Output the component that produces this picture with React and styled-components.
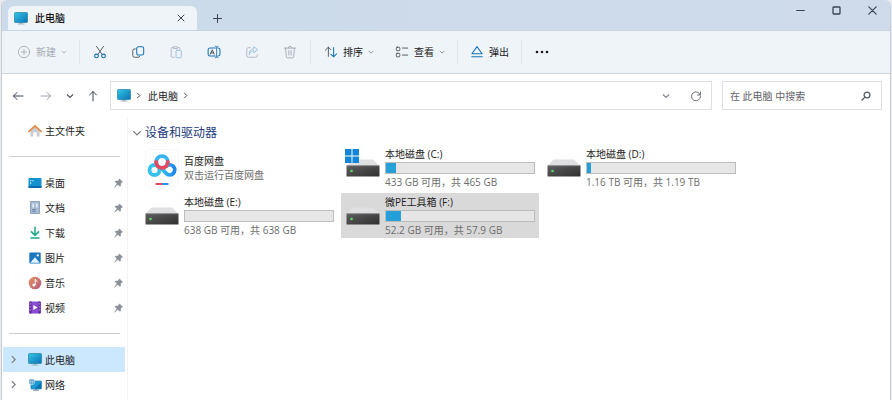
import React, { useState } from 'react';
import styled, { createGlobalStyle } from 'styled-components';

const GlobalStyle = createGlobalStyle`
  * { box-sizing: border-box; }
  html, body, #root { height: 100%; }
  body {
    margin: 0;
    background: #e9ebee;
    font-family: 'Open Sans', 'Noto Sans CJK SC', sans-serif;
    font-size: 10px;
    line-height: 14px;
    color: #1b1b1b;
  }
  button, input {
    font: inherit;
    color: inherit;
    border: none;
    background: none;
    padding: 0;
    margin: 0;
  }
  svg { display: block; flex-shrink: 0; }
`;

const Window = styled.div`
  height: 100%;
  margin: 0 1px;
  display: flex;
  flex-direction: column;
  background: #fff;
  border: 1px solid #c5ccd6;
  border-width: 0 1px;
  border-radius: 6px 6px 0 0;
  overflow: hidden;
`;

const TitleBar = styled.header`
  height: 30px;
  flex-shrink: 0;
  display: flex;
  align-items: flex-end;
  padding-left: 6px;
  background: linear-gradient(90deg, #cbdbea, #cfdbeb);
`;

const Tab = styled.div`
  width: 189px;
  height: 24px;
  display: flex;
  align-items: center;
  gap: 7px;
  padding: 0 8px 0 6px;
  background: #eff4f9;
  border-radius: 6px 6px 0 0;
`;

const TabTitle = styled.span`
  flex: 1;
  font-weight: 500;
  color: #111;
`;

const IconBtn = styled.button`
  width: ${p => p.$w || 20}px;
  height: ${p => p.$h || 20}px;
  display: flex;
  align-items: center;
  justify-content: center;
  flex-shrink: 0;
  color: ${p => p.$color || '#3b4350'};
  border-radius: 3px;
  &:hover:not(:disabled) { background: rgba(0, 0, 0, 0.06); }
`;

const NewTab = styled.div`
  margin-left: 10px;
  padding-bottom: 2px;
`;

const WindowControls = styled.div`
  margin-left: auto;
  align-self: flex-start;
  display: flex;
`;

const Toolbar = styled.div`
  height: 44px;
  flex-shrink: 0;
  display: flex;
  align-items: center;
  padding: 0 15px;
  background: #eff4f9;
  border-top: 1px solid #c9d4e1;
  border-bottom: 1px solid #cfd5df;
`;

const ToolGroup = styled.div`
  display: flex;
  gap: 21px;
  padding-left: 1px;
`;

const IconGroup = styled.div`
  display: flex;
  gap: 18px;
  margin: 0 -2px;
`;

const ToolBtn = styled.button`
  height: 28px;
  display: flex;
  align-items: center;
  gap: 5px;
  color: ${p => (p.disabled ? '#a5abb3' : '#1b1b1b')};
  border-radius: 3px;
  &:hover:not(:disabled) { background: rgba(0, 0, 0, 0.05); }
`;

const Separator = styled.span`
  width: 1px;
  height: 24px;
  margin: 0 12px;
  background: #dfe4eb;
`;

const AddressRow = styled.div`
  display: flex;
  align-items: center;
  flex-shrink: 0;
  padding: 7px 8px 8px 6px;
`;

const NavButtons = styled.div`
  display: flex;
  gap: 4px;
  width: 102px;
`;

const AddressBox = styled.div`
  flex: 1;
  height: 29px;
  display: flex;
  align-items: center;
  gap: 4px;
  padding: 0 5px 0 6px;
  border: 1px solid #dcdfe3;
`;

const Crumb = styled.a`
  color: #1b1b1b;
  text-decoration: none;
  margin-left: 2px;
`;

const BoxTools = styled.div`
  margin-left: auto;
  display: flex;
  gap: 10px;
`;

const SearchBox = styled.form`
  width: 160px;
  height: 29px;
  margin-left: 10px;
  display: flex;
  align-items: center;
  padding: 0 5px 0 7px;
  border: 1px solid #dcdfe3;
`;

const SearchInput = styled.input`
  flex: 1;
  min-width: 0;
  outline: none;
  &::placeholder { color: #5f6368; opacity: 1; }
`;

const Body = styled.div`
  flex: 1;
  min-height: 0;
  display: flex;
`;

const Sidebar = styled.nav`
  width: 126px;
  flex-shrink: 0;
  border-right: 1px solid #f3f3f3;
  overflow: hidden;
`;

const SideLink = styled.a`
  height: 25px;
  margin: 0 2px 0 1px;
  display: flex;
  align-items: center;
  gap: 3px;
  padding: 0 2px 0 6px;
  color: #1b1b1b;
  text-decoration: none;
  background: ${p => (p.$active ? '#cce8ff' : 'transparent')};
`;

const Expander = styled.span`
  width: 16px;
`;

const SideLabel = styled.span`
  flex: 1;
`;

const Rule = styled.hr`
  margin: 13px 7px;
  border: none;
  height: 1px;
  background: #cfcfcf;
`;

const Main = styled.main`
  flex: 1;
  min-width: 0;
  padding: 5px 8px 0 4px;
`;

const GroupHeader = styled.h2`
  display: flex;
  align-items: center;
  gap: 3px;
  margin: 0;
  height: 20px;
  font-size: 12px;
  font-weight: 400;
  color: #22397c;
`;

const Grid = styled.div`
  display: grid;
  grid-template-columns: repeat(auto-fill, 198px);
  gap: 3px;
  padding: 2px 0 0 8px;
`;

const Tile = styled.button`
  height: 45px;
  display: flex;
  align-items: center;
  gap: 5px;
  padding: 0 4px 0 5px;
  text-align: left;
  border-radius: 1px;
  background: ${p => (p.$selected ? '#d9d9d9' : 'transparent')};
`;

const TileIcon = styled.span`
  position: relative;
  width: 34px;
  display: flex;
  justify-content: center;
`;

const Badge = styled.span`
  position: absolute;
  top: -10px;
  left: -1px;
`;

const TileText = styled.span`
  flex: 1;
  min-width: 0;
  display: flex;
  flex-direction: column;
`;

const Name = styled.span`
  color: #1b1b1b;
`;

const Sub = styled.span`
  color: #6d6d6d;
`;

const Usage = styled.span`
  height: 12px;
  margin: 1px 0;
  border: 1px solid #bcbcbc;
  background: #e6e6e6;
`;

const UsageFill = styled.span`
  display: block;
  height: 100%;
  background: #26a0da;
`;

const Svg = ({ w = 14, box = 16, sw = 1, children }) => (
  <svg width={w} height={w} viewBox={`0 0 ${box} ${box}`} fill="none" stroke="currentColor"
    strokeWidth={sw} strokeLinecap="round" strokeLinejoin="round" aria-hidden="true">
    {children}
  </svg>
);

const Chevron = ({ dir = 'down', size = 8, color = '#7b8189' }) => (
  <svg width={size} height={size} viewBox="0 0 8 8" fill="none" stroke={color} strokeWidth="1.1" aria-hidden="true">
    <path d={dir === 'down' ? 'M1 2.5 4 5.5 7 2.5' : 'M2.5 1 5.5 4 2.5 7'} />
  </svg>
);

const MonitorIcon = () => (
  <svg width="14" height="13" viewBox="0 0 14 13" aria-hidden="true">
    <defs>
      <linearGradient id="screen" x1="0" y1="0" x2="1" y2="1">
        <stop offset="0" stopColor="#35c6e2" />
        <stop offset="1" stopColor="#0a72b8" />
      </linearGradient>
    </defs>
    <path d="M5.5 10h3v1.7h-3z" fill="#8ea6b5" />
    <path d="M3.5 11.6h7v1h-7z" fill="#9fb4c2" />
    <rect x="0.5" y="0.5" width="13" height="10" rx="0.8" fill="url(#screen)" stroke="#2384a8" strokeWidth="0.7" />
  </svg>
);

const HomeIcon = () => (
  <svg width="14" height="14" viewBox="0 0 14 14" aria-hidden="true">
    <path d="M2.4 6.4 7 2.4l4.6 4v6.1H8.6V8.4H5.4v4.1h-3z" fill="#c9ccd1" />
    <path d="M5.4 8.4h3.2v4.1H5.4z" fill="#fff" />
    <path d="M1 7.4 7 1.9l6 5.5" fill="none" stroke="#e0904c" strokeWidth="1.9" strokeLinecap="round" strokeLinejoin="round" />
  </svg>
);

const DesktopIcon = () => (
  <svg width="14" height="12" viewBox="0 0 14 12" aria-hidden="true">
    <rect x="0.5" y="1" width="13" height="10" rx="1" fill="#1492cf" />
    <path d="M1 11h12a.5.5 0 0 0 .5-.5V9H.5v1.5a.5.5 0 0 0 .5.5z" fill="#0c6cab" />
    <path d="M2 3h1.3v1.2H2zM2 5.5h1.3v1.2H2zM4.4 3h1v1.2h-1z" fill="#d5f3ff" />
  </svg>
);

const DocumentIcon = () => (
  <svg width="14" height="13" viewBox="0 0 14 13" aria-hidden="true">
    <path d="M2.5.5h9v12h-9z" fill="#a7bbd3" stroke="#7b94b3" strokeWidth="0.8" />
    <path d="M4.3 2.6h5.4v4H4.3z" fill="#dfe9f4" />
    <path d="M7 2.6v4M4.3 8.5h3.4M4.3 10.3h3.4" stroke="#53739b" strokeWidth="0.8" />
  </svg>
);

const DownloadIcon = () => (
  <svg width="14" height="13" viewBox="0 0 14 13" fill="none" stroke="#1ea78a" strokeWidth="1.5" aria-hidden="true">
    <path d="M7 .8v8M3 5.4l4 4 4-4M2.5 12h9" />
  </svg>
);

const PictureIcon = () => (
  <svg width="14" height="12" viewBox="0 0 14 12" aria-hidden="true">
    <rect x="1.3" y="0.5" width="11.4" height="11" rx="1" fill="#1b78bd" />
    <path d="M2.3 10.8 7 5.2l4.7 5.6z" fill="#e6f5ff" />
    <circle cx="9.8" cy="3.4" r="1.1" fill="#fff" />
  </svg>
);

const MusicIcon = () => (
  <svg width="14" height="14" viewBox="0 0 14 14" aria-hidden="true">
    <defs>
      <linearGradient id="music" x1="0" y1="0" x2="1" y2="1">
        <stop offset="0" stopColor="#e8925f" />
        <stop offset="1" stopColor="#b3587c" />
      </linearGradient>
    </defs>
    <circle cx="7" cy="7" r="6.3" fill="url(#music)" />
    <path d="M7.2 9V3.2c.4 1.2 1.8 1.2 2 2.6" fill="none" stroke="#fff" strokeWidth="1" />
    <circle cx="5.9" cy="9.1" r="1.5" fill="#fff" />
  </svg>
);

const VideoIcon = () => (
  <svg width="14" height="13" viewBox="0 0 14 13" aria-hidden="true">
    <rect x="1.2" y="0.5" width="11.6" height="12" rx="1" fill="#8a4bd0" />
    <path d="M1.2 1.5a1 1 0 0 1 1-1h1.3v12H2.2a1 1 0 0 1-1-1zM10.6.5h1.2a1 1 0 0 1 1 1v10a1 1 0 0 1-1 1h-1.2z" fill="#5a2a9c" />
    <path d="M1.7 2.2h1v1.2h-1zm0 3h1v1.2h-1zm0 3h1v1.2h-1zm9.6-6h1v1.2h-1zm0 3h1v1.2h-1zm0 3h1v1.2h-1z" fill="#d9c2f5" />
    <path d="m5.4 4 4 2.5-4 2.5z" fill="#fff" />
  </svg>
);

const NetworkIcon = () => (
  <svg width="14" height="13" viewBox="0 0 14 13" aria-hidden="true">
    <path d="M6.8 10.5h2.6v1.6H6.8z" fill="#8ea6b5" />
    <path d="M5 11.8h6v.9H5z" fill="#7f9bb0" />
    <rect x="3" y="3" width="10.5" height="8" rx="0.6" fill="#1a9bd2" stroke="#1874a6" strokeWidth="0.6" />
    <path d="m7 10.5 6-6v6z" fill="#0e6fae" />
    <circle cx="3.8" cy="3.8" r="3" fill="#4595c0" stroke="#fff" strokeWidth="0.4" />
    <path d="M.9 3.8h5.8M3.8.9c-1.5 2-1.5 3.8 0 5.8M3.8.9c1.5 2 1.5 3.8 0 5.8" fill="none" stroke="#dff1fa" strokeWidth="0.5" />
  </svg>
);

const PinIcon = () => (
  <svg width="9" height="10" viewBox="0 0 9 10" fill="#8a9098" stroke="#8a9098" strokeWidth="0.5" strokeLinejoin="round" aria-hidden="true">
    <path d="M5.4.8 8.6 4l-1 .4-1 1.3.1 2-.8.7-2-2L.6 9.3 3 5.5 1 3.7l.7-.7 2.1.1 1.1-1.2z" />
  </svg>
);

const DriveIcon = () => (
  <svg width="34" height="18" viewBox="0 0 34 18" aria-hidden="true">
    <defs>
      <linearGradient id="driveFront" x1="0" y1="0" x2="1" y2="1">
        <stop offset="0" stopColor="#5e5e5e" />
        <stop offset="1" stopColor="#303030" />
      </linearGradient>
    </defs>
    <path d="M6.5.5h20.5L33.5 7H.5z" fill="#e0e0e3" />
    <rect x="0.5" y="6.5" width="33" height="11" rx="0.6" fill="url(#driveFront)" />
    <path d="M.5 6.8h33" stroke="#8a8a8a" strokeWidth="0.6" />
    <circle cx="5.5" cy="12" r="1.3" fill="#58d66c" />
  </svg>
);

const WindowsBadge = () => (
  <svg width="14" height="14" viewBox="0 0 14 14" aria-hidden="true">
    <path d="M0 0h6.5v6.5H0zM7.5 0H14v6.5H7.5zM0 7.5h6.5V14H0zM7.5 7.5H14V14H7.5z" fill="#1385d8" />
  </svg>
);

const NetdiskIcon = () => (
  <svg width="34" height="38" viewBox="0 0 34 38" aria-hidden="true">
    <defs>
      <linearGradient id="diskBlue" x1="0" y1="0" x2="1" y2="0">
        <stop offset="0" stopColor="#35c0ee" />
        <stop offset="1" stopColor="#1f86ec" />
      </linearGradient>
    </defs>
    <rect x="0.5" y="0.5" width="33" height="37" rx="5" fill="#fff" stroke="#f4f6f8" />
    <g fill="none" strokeWidth="3.8" strokeLinecap="round">
      <circle cx="9.5" cy="21" r="5" stroke="#35c3ee" />
      <path d="M21.5 17a5 5 0 1 1-.4 7.4L17 20" stroke="url(#diskBlue)" />
      <circle cx="17" cy="13" r="5.8" stroke="#35b3ee" />
      <path d="M11.2 13a5.8 5.8 0 0 0 11.6 0" stroke="#e8495f" />
    </g>
    <path d="M10.5 34H17v2h-6.5z" fill="#e8495f" />
    <path d="M17 34h6.5v2H17z" fill="#2b8fee" />
  </svg>
);

const PINNED = [
  { label: '桌面', icon: DesktopIcon },
  { label: '文档', icon: DocumentIcon },
  { label: '下载', icon: DownloadIcon },
  { label: '图片', icon: PictureIcon },
  { label: '音乐', icon: MusicIcon },
  { label: '视频', icon: VideoIcon },
];

const PLACES = [
  { label: '此电脑', icon: MonitorIcon, active: true },
  { label: '网络', icon: NetworkIcon },
];

// used = percent of the bar that is filled
const ITEMS = [
  { id: 'netdisk', name: '百度网盘', sub: '双击运行百度网盘' },
  { id: 'c', name: '本地磁盘 (C:)', sub: '433 GB 可用，共 465 GB', used: 7, system: true },
  { id: 'd', name: '本地磁盘 (D:)', sub: '1.16 TB 可用，共 1.19 TB', used: 3 },
  { id: 'e', name: '本地磁盘 (E:)', sub: '638 GB 可用，共 638 GB', used: 0 },
  { id: 'f', name: '微PE工具箱 (F:)', sub: '52.2 GB 可用，共 57.9 GB', used: 10 },
];

function SideItem({ label, icon: Icon, active, pinned, expandable }) {
  return (
    <SideLink href="#" $active={active}>
      <Expander>{expandable && <Chevron dir="right" size={9} />}</Expander>
      <Icon />
      <SideLabel>{label}</SideLabel>
      {pinned && <PinIcon />}
    </SideLink>
  );
}

function DeviceTile({ item, selected, onSelect }) {
  const isDrive = item.used !== undefined;
  return (
    <Tile $selected={selected} onClick={() => onSelect(item.id)}>
      <TileIcon>
        {isDrive ? <DriveIcon /> : <NetdiskIcon />}
        {item.system && <Badge><WindowsBadge /></Badge>}
      </TileIcon>
      <TileText>
        <Name>{item.name}</Name>
        {isDrive && <Usage><UsageFill style={{ width: `${item.used}%` }} /></Usage>}
        <Sub>{item.sub}</Sub>
      </TileText>
    </Tile>
  );
}

function CommandBar() {
  return (
    <Toolbar>
      <ToolBtn disabled>
        <Svg><circle cx="8" cy="8" r="6.5" /><path d="M8 5v6M5 8h6" /></Svg>
        新建
        <Chevron color="#a5abb3" size={6} />
      </ToolBtn>
      <Separator />
      <IconGroup>
        <IconBtn aria-label="剪切">
          <Svg>
            <path d="M4 1.5 10.5 11M12 1.5 5.5 11" stroke="#454b54" />
            <circle cx="4" cy="12.5" r="2.1" stroke="#1673b5" strokeWidth="1.3" />
            <circle cx="12" cy="12.5" r="2.1" stroke="#1673b5" strokeWidth="1.3" />
          </Svg>
        </IconBtn>
        <IconBtn aria-label="复制">
          <Svg>
            <rect x="6.5" y="2" width="8" height="9.5" rx="2" stroke="#1673b5" strokeWidth="1.2" />
            <path d="M5 4.5H4a2 2 0 0 0-2 2V12a2 2 0 0 0 2 2h4a2 2 0 0 0 2-1" stroke="#454b54" />
          </Svg>
        </IconBtn>
        <IconBtn aria-label="粘贴" disabled $color="#a9b4c0">
          <Svg>
            <path d="M5 3H3.5a1 1 0 0 0-1 1v9a1 1 0 0 0 1 1H6M10 3h1.5a1 1 0 0 1 1 1v.5M5.5 2h4v2h-4z" />
            <rect x="8" y="6" width="6" height="8.5" rx="1" stroke="#93bbdc" />
          </Svg>
        </IconBtn>
        <IconBtn aria-label="重命名">
          <Svg>
            <path d="M9.5 3.5H3.3a2 2 0 0 0-2 2v5a2 2 0 0 0 2 2h6.2M12.5 3.5h.3a2 2 0 0 1 2 2v5a2 2 0 0 1-2 2h-.3" stroke="#1673b5" strokeWidth="1.2" />
            <path d="M9.5 1.5c1.2 0 1.5.5 1.5 1.2v10.6c0 .7-.3 1.2-1.5 1.2M12.5 1.5c-1.2 0-1.5.5-1.5 1.2M12.5 14.5c-1.2 0-1.5-.5-1.5-1.2" stroke="#1673b5" />
            <path d="M3.8 10.5 6 5.5l2.2 5M4.6 9h2.8" stroke="#36404d" />
          </Svg>
        </IconBtn>
        <IconBtn aria-label="共享" disabled $color="#a9b4c0">
          <Svg>
            <path d="M6 3H4a2 2 0 0 0-2 2v7a2 2 0 0 0 2 2h8a2 2 0 0 0 2-2v-1" />
            <path d="M5 10.5c.5-3 2.5-4 5-4V9l4.5-3.7L10 2v2.3C6.5 4.5 5 7 5 10.5z" stroke="#93bbdc" />
          </Svg>
        </IconBtn>
        <IconBtn aria-label="删除" disabled $color="#9fa6af">
          <Svg>
            <path d="M1.5 3.5h13M6 3.5a2 2 0 0 1 4 0M3 3.5l.8 10a1.3 1.3 0 0 0 1.3 1.2h5.8a1.3 1.3 0 0 0 1.3-1.2l.8-10M6.7 6.5v5M9.3 6.5v5" />
          </Svg>
        </IconBtn>
      </IconGroup>
      <Separator />
      <ToolGroup>
        <ToolBtn>
          <Svg>
            <path d="M5 13V2.5M1.5 6 5 2.5 8 5.5" stroke="#454b54" />
            <path d="M11 3v10.5M7.8 10.5l3.2 3 3.5-3.5" stroke="#1673b5" strokeWidth="1.2" />
          </Svg>
          排序
          <Chevron size={6} />
        </ToolBtn>
        <ToolBtn>
          <Svg>
            <rect x="1.5" y="2.5" width="4" height="4" rx="1" stroke="#454b54" />
            <rect x="1.5" y="9.5" width="4" height="4" rx="1" stroke="#454b54" />
            <path d="M8.5 3.5h6M8.5 11.5h6" stroke="#454b54" />
          </Svg>
          查看
          <Chevron size={6} />
        </ToolBtn>
      </ToolGroup>
      <Separator />
      <ToolBtn>
        <Svg>
          <path d="M8 1.8 13.8 10H2.2z" stroke="#1673b5" strokeWidth="1.2" />
          <path d="M2 13.5h12" stroke="#1673b5" strokeWidth="1.2" />
        </Svg>
        弹出
      </ToolBtn>
      <Separator />
      <IconBtn aria-label="更多" $w={16} $color="#1b1b1b">
        <svg width="14" height="4" viewBox="0 0 14 4" fill="currentColor" aria-hidden="true">
          <circle cx="2" cy="2" r="1.3" /><circle cx="7" cy="2" r="1.3" /><circle cx="12" cy="2" r="1.3" />
        </svg>
      </IconBtn>
    </Toolbar>
  );
}

export default function App() {
  const [selected, setSelected] = useState('f');
  const [query, setQuery] = useState('');

  return (
    <>
      <GlobalStyle />
      <Window>
        <TitleBar>
          <Tab>
            <MonitorIcon />
            <TabTitle>此电脑</TabTitle>
            <IconBtn aria-label="关闭标签页" $w={16} $h={16}>
              <Svg w={8} box={8}><path d="M1 1l6 6M7 1 1 7" /></Svg>
            </IconBtn>
          </Tab>
          <NewTab>
            <IconBtn aria-label="新建标签页">
              <Svg w={9} box={9}><path d="M4.5.5v8M.5 4.5h8" /></Svg>
            </IconBtn>
          </NewTab>
          <WindowControls>
            <IconBtn aria-label="最小化" $w={36}><Svg w={9} box={9} sw={1.2}><path d="M.7 4.5h7.6" /></Svg></IconBtn>
            <IconBtn aria-label="最大化" $w={36}><Svg w={9} box={9} sw={1.3}><rect x="1" y="1" width="7" height="7" rx="0.8" /></Svg></IconBtn>
            <IconBtn aria-label="关闭" $w={36}><Svg w={9} box={9} sw={1.2}><path d="M.8.8l7.4 7.4M8.2.8.8 8.2" /></Svg></IconBtn>
          </WindowControls>
        </TitleBar>

        <CommandBar />

        <AddressRow>
          <NavButtons>
            <IconBtn aria-label="后退"><Svg w={12} box={12}><path d="M11 6H1.5M5 2.5 1.5 6 5 9.5" /></Svg></IconBtn>
            <IconBtn aria-label="前进" $w={28} $color="#9aa0a8"><Svg w={12} box={12}><path d="M1 6h9.5M7 2.5 10.5 6 7 9.5" /></Svg></IconBtn>
            <IconBtn aria-label="最近位置" $w={12}><Chevron color="#4a5059" /></IconBtn>
            <IconBtn aria-label="上移" $w={26}><Svg w={12} box={12}><path d="M6 11V1.5M2.5 5 6 1.5 9.5 5" /></Svg></IconBtn>
          </NavButtons>
          <AddressBox>
            <MonitorIcon />
            <Chevron dir="right" size={7} color="#3b4350" />
            <Crumb href="#">此电脑</Crumb>
            <Chevron dir="right" size={7} color="#3b4350" />
            <BoxTools>
              <IconBtn aria-label="历史记录"><Chevron /></IconBtn>
              <IconBtn aria-label="刷新" $color="#6b7078">
                <Svg w={12} box={12}><path d="M10.3 5A4.5 4.5 0 1 0 10.5 6.5M10.5 2v3H7.5" /></Svg>
              </IconBtn>
            </BoxTools>
          </AddressBox>
          <SearchBox onSubmit={e => e.preventDefault()}>
            <SearchInput
              aria-label="在 此电脑 中搜索"
              placeholder="在 此电脑 中搜索"
              value={query}
              onChange={e => setQuery(e.target.value)}
            />
            <IconBtn aria-label="搜索" $color="#555b63">
              <Svg w={10} box={10} sw={1.3}><circle cx="6" cy="4" r="2.9" /><path d="M3.8 6.2.9 9.1" /></Svg>
            </IconBtn>
          </SearchBox>
        </AddressRow>

        <Body>
          <Sidebar>
            <SideItem label="主文件夹" icon={HomeIcon} />
            <Rule />
            {PINNED.map(p => <SideItem key={p.label} {...p} pinned />)}
            <Rule />
            {PLACES.map(p => <SideItem key={p.label} {...p} expandable />)}
          </Sidebar>
          <Main>
            <GroupHeader>
              <Chevron size={10} />
              设备和驱动器
            </GroupHeader>
            <Grid>
              {ITEMS.map(item => (
                <DeviceTile key={item.id} item={item} selected={selected === item.id} onSelect={setSelected} />
              ))}
            </Grid>
          </Main>
        </Body>
      </Window>
    </>
  );
}
